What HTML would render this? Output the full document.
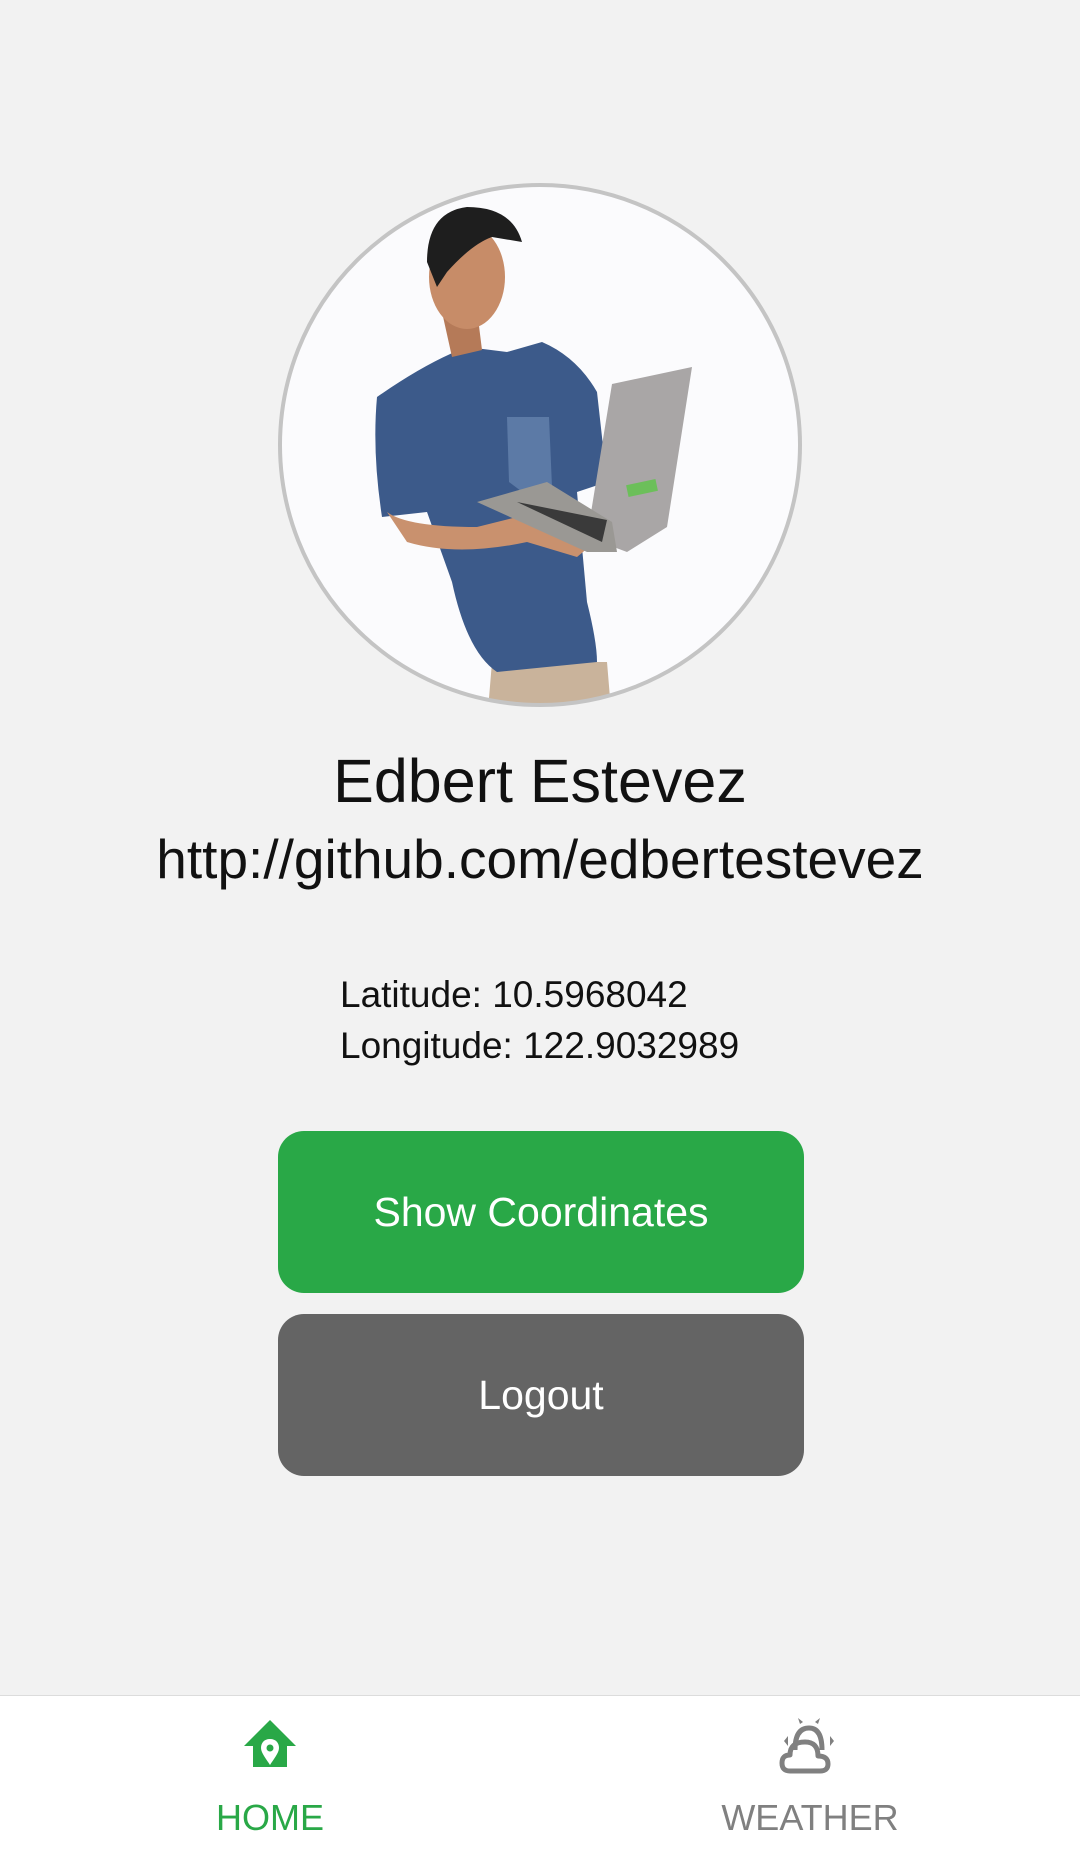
<!DOCTYPE html>
<html><head><meta charset="utf-8"><style>
html,body{margin:0;padding:0}
body{width:1080px;height:1852px;background:#f2f2f2;position:relative;overflow:hidden;font-family:"Liberation Sans",sans-serif}
.abs{position:absolute}
.c{left:0;width:1080px;text-align:center}
.btn{position:absolute;left:278px;width:526px;height:162px;border-radius:26px;color:#fff;font-size:41px;text-align:center;line-height:162px}
</style></head><body>
<svg class="abs" style="left:277px;top:182px" width="526" height="526" viewBox="0 0 526 526">
<defs><clipPath id="cp"><circle cx="263" cy="263" r="259"/></clipPath></defs>
<circle cx="263" cy="263" r="259" fill="#fbfbfd"/>
<g clip-path="url(#cp)">
<path d="M215 480 L330 480 L335 540 L210 540Z" fill="#c9b39b"/>
<path d="M100 215 Q150 180 190 165 L230 170 L265 160 Q300 175 320 210 L330 300 L300 310 L310 420 Q320 460 320 480 L220 490 Q190 470 175 400 L150 330 L105 335 Q95 270 100 215Z" fill="#3c5a8a"/>
<path d="M230 235 L272 235 L275 305 L252 315 L232 300Z" fill="#5c7aa6"/>
<path d="M110 330 Q130 345 200 345 L260 330 L330 350 L300 375 L250 360 Q180 375 130 360Z" fill="#c9916e"/>
<path d="M165 130 L200 128 L205 168 L175 175Z" fill="#b57a58"/>
<ellipse cx="190" cy="95" rx="38" ry="52" fill="#c78c68"/>
<path d="M150 80 Q150 30 190 25 Q235 25 245 60 L215 55 Q195 62 170 90 L160 105Z" fill="#1e1e1e"/>
<path d="M310 355 L335 202 L415 185 L390 345 L350 370Z" fill="#a9a6a6"/>
<path d="M200 320 L270 300 L335 340 L340 370 L310 370Z" fill="#9a9894"/>
<path d="M240 320 L330 338 L325 360 Z" fill="#3a3a3a"/>
<rect x="350" y="300" width="30" height="12" fill="#6cbf5a" transform="rotate(-12 365 306)"/>
</g>
<circle cx="263" cy="263" r="260" fill="none" stroke="#c4c4c4" stroke-width="4"/>
</svg>
<div class="abs c" style="top:746px;font-size:61px;color:#111">Edbert Estevez</div>
<div class="abs c" style="top:827px;font-size:55px;color:#111">http://github.com/edbertestevez</div>
<div class="abs" style="left:340px;top:969px;font-size:37px;color:#111;line-height:51px">Latitude: 10.5968042<br>Longitude: 122.9032989</div>
<div class="btn" style="top:1131px;background:#29a847">Show Coordinates</div>
<div class="btn" style="top:1314px;background:#646464">Logout</div>
<div class="abs" style="left:0;top:1695px;width:1080px;height:157px;background:#fff;border-top:1px solid #dcdcdc"></div>
<svg class="abs" style="left:243px;top:1718px" width="54" height="52" viewBox="0 0 54 52">
<path d="M27 2 L53 28 L44 28 L44 49 L10 49 L10 28 L1 28Z" fill="#29a847"/>
<path d="M27 21 C21 21 18 25 18 30 C18 35 24 42 27 47 C30 42 36 35 36 30 C36 25 33 21 27 21Z" fill="#fff"/>
<circle cx="27" cy="30" r="3.5" fill="#29a847"/>
</svg>
<div class="abs" style="left:170px;width:200px;text-align:center;top:1797px;font-size:36px;color:#29a847">HOME</div>
<svg class="abs" style="left:776px;top:1716px" width="66" height="60" viewBox="0 0 66 60">
<g fill="none" stroke="#808080" stroke-width="5" stroke-linejoin="round">
<path d="M14 55 Q6 55 6 47 Q6 39 14 39 Q14 26 29 26 Q42 26 42 40 Q52 40 52 48 Q52 55 44 55Z"/>
<path d="M19 34 Q19 12 33 12 Q46 12 46 34"/>
</g>
<path d="M22 2 L27 6 L24 8 Z M44 2 L39 6 L42 8Z M8 25 L12 20 L12 30Z M58 25 L54 20 L54 30Z" fill="#808080"/>
</svg>
<div class="abs" style="left:690px;width:240px;text-align:center;top:1797px;font-size:36px;color:#808080">WEATHER</div>
</body></html>
